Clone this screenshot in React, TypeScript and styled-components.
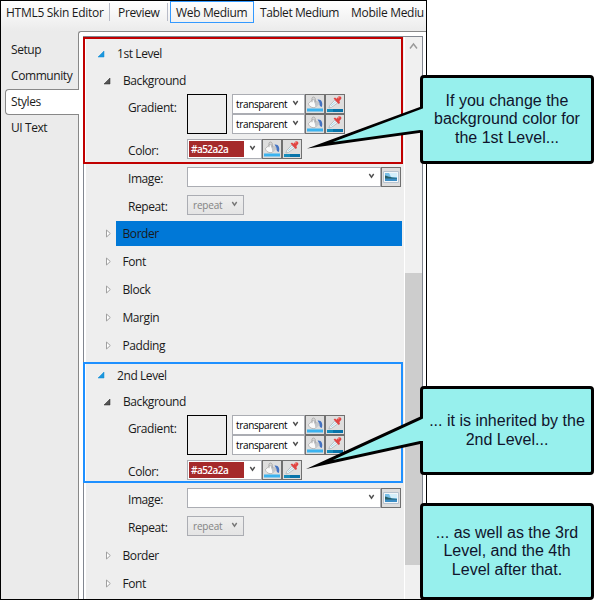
import React from 'react';
import styled, { createGlobalStyle } from 'styled-components';

const GlobalStyle = createGlobalStyle`
  * { box-sizing: border-box; }
  html, body { margin: 0; padding: 0; background: #fff; overflow: hidden; }
`;

const Page = styled.div`
  position: relative;
  width: 604px;
  height: 600px;
  overflow: hidden;
  background: #fff;
  color: #1a1a1a;
  font-family: 'Open Sans', 'Noto Sans', sans-serif;
  font-size: 12px;
  line-height: 16px;
  letter-spacing: -0.42px;
  white-space: nowrap;
`;

const Window = styled.div`
  display: flex;
  flex-direction: column;
  width: 427px;
  height: 600px;
  border: 1px solid #000;
  background: #ebebeb;
  overflow: hidden;
`;

const Toolbar = styled.header`
  display: flex;
  align-items: flex-start;
  flex: 0 0 30px;
  padding-left: 5px;
  background: linear-gradient(#fff, #ebebeb);
`;

const ToolItem = styled.div<{ $width: number; $indent?: number; $spacing?: number; $active?: boolean }>`
  flex: 0 0 ${(p) => p.$width}px;
  height: 22px;
  padding: ${(p) => (p.$active ? 3 : 4)}px 0 0 ${(p) => p.$indent ?? 0}px;
  border: ${(p) => (p.$active ? '1px solid #3399ff' : '0')};
  letter-spacing: ${(p) => p.$spacing ?? -0.34}px;
`;

const Separator = styled.div<{ $after: number }>`
  flex: 0 0 1px;
  height: 18px;
  margin: 2px ${(p) => p.$after}px 0 0;
  background: #b9bcc8;
`;

const Body = styled.div`
  display: flex;
  flex: 1;
  min-height: 0;
`;

const Sidebar = styled.nav`
  flex: 0 0 78px;
  padding: 6px 0 0 4px;
  z-index: 1;
`;

const SideTab = styled.div<{ $active?: boolean }>`
  height: 26px;
  width: 74px;
  padding: ${(p) => (p.$active ? '4px 0 0 5px' : '5px 0 0 6px')};
  border: ${(p) => (p.$active ? '1px solid #888' : '0')};
  border-right: 0;
  border-radius: 4px 0 0 4px;
  background: ${(p) => (p.$active ? '#fff' : 'transparent')};
`;

const TabPage = styled.main`
  display: flex;
  flex: 1;
  margin-left: -1px;
  padding: 4px 3px 0 4px;
  border: 1px solid #888;
  border-right: 0;
  border-bottom: 0;
  border-top-left-radius: 3px;
  background: #fff;
`;

const TreeFrame = styled.div`
  display: flex;
  flex: 1;
  min-width: 0;
  border: 1px solid #828790;
  border-bottom: 0;
  background: #fff;
  overflow: hidden;
`;

const Tree = styled.div`
  flex: 0 0 318px;
  margin-left: 2px;
  background: #eee;
`;

const ScrollTrack = styled.div`
  display: flex;
  flex-direction: column;
  flex: 0 0 17px;
  margin-left: 1px;
  background: #f0f0f0;
`;

const ScrollArrow = styled.svg`
  width: 17px;
  height: 236px;
`;

const ScrollThumb = styled.div`
  height: 292px;
  background: #cdcdcd;
`;

const TreeRow = styled.div<{ $height: number; $indent: number }>`
  display: flex;
  align-items: center;
  height: ${(p) => p.$height}px;
  padding-left: ${(p) => p.$indent}px;
`;

const Glyph = styled.svg<{ $gap: number }>`
  flex: none;
  width: 8px;
  height: 9px;
  margin-right: ${(p) => p.$gap}px;
`;

const GroupLabel = styled.div<{ $selected?: boolean }>`
  flex: 1;
  height: 25px;
  margin-right: 2px;
  padding: 5.5px 0 0 6.5px;
  background: ${(p) => (p.$selected ? '#0078d7' : 'transparent')};
`;

const Field = styled.div<{ $height: number; $top: number }>`
  display: flex;
  height: ${(p) => p.$height}px;
  padding: ${(p) => p.$top}px 0 0 42px;
`;

const FieldLabel = styled.div<{ $top?: number }>`
  flex: 0 0 59px;
  padding-top: ${(p) => p.$top ?? 3.5}px;
`;

const Preview = styled.div`
  width: 40px;
  height: 40px;
  margin-right: 5px;
  border: 1px solid #000;
`;

const Stack = styled.div`
  display: flex;
  flex-direction: column;
`;

const Line = styled.div`
  display: flex;
  height: 20px;
`;

const Combo = styled.div<{ $width: number; $disabled?: boolean }>`
  display: flex;
  align-items: center;
  justify-content: space-between;
  width: ${(p) => p.$width}px;
  height: 20px;
  padding: 0 5px 0 ${(p) => (p.$disabled ? 5 : 3)}px;
  border: 1px solid #abadb3;
  background: ${(p) => (p.$disabled ? 'linear-gradient(#efefef, #e4e4e4)' : '#fff')};
  color: ${(p) => (p.$disabled ? '#838383' : '#000')};
  font-size: 10px;
  font-weight: 500;
  line-height: 14px;
  letter-spacing: ${(p) => (p.$disabled ? -0.2 : -0.35)}px;
`;

const Swatch = styled.div`
  width: 55px;
  height: 16px;
  margin-left: -2px;
  padding: 1px 0 0 2px;
  background: #a52a2a;
  color: #fff;
  font-weight: 600;
  letter-spacing: -0.55px;
`;

const Chevron = styled.svg`
  flex: none;
  width: 7px;
  height: 6px;
  margin-bottom: 2px;
`;

const IconButton = styled.div`
  width: 20px;
  height: 20px;
  border: 1px solid #707070;
  background: #dedede;

  svg { display: block; }
`;

const Highlight = styled.div<{ $top: number; $height: number; $color: string }>`
  position: absolute;
  left: 83px;
  top: ${(p) => p.$top}px;
  width: 320px;
  height: ${(p) => p.$height}px;
  border: 2px solid ${(p) => p.$color};
`;

const Callout = styled.div<{ $top: number; $height: number }>`
  position: absolute;
  left: 420px;
  top: ${(p) => p.$top}px;
  display: flex;
  align-items: center;
  justify-content: center;
  width: 174px;
  height: ${(p) => p.$height}px;
  border: 3px solid #000;
  border-radius: 4px;
  background: #97f0ed;
  color: #10142c;
  font-family: 'Liberation Sans', Arial, sans-serif;
  font-size: 16px;
  line-height: 18.4px;
  letter-spacing: 0;
  text-align: center;
`;

const Tail = styled.svg`
  position: absolute;
  left: 300px;
  top: 0;
  width: 130px;
  height: 600px;
`;

function Expanded({ blue, gap }: { blue?: boolean; gap: number }) {
  return (
    <Glyph $gap={gap} viewBox="0 0 8 9">
      <path
        d="M7 1V7H1Z"
        fill={blue ? '#1c97dc' : '#555'}
        stroke={blue ? '#0f8ad6' : '#262626'}
        strokeWidth=".5"
      />
    </Glyph>
  );
}

function Collapsed() {
  return (
    <Glyph $gap={4} viewBox="0 0 8 9">
      <path d="M2.5 1L6.3 4.5L2.5 8Z" fill="#fff" stroke="#a0a0a0" />
    </Glyph>
  );
}

function Down({ muted }: { muted?: boolean }) {
  return (
    <Chevron viewBox="0 0 7 6">
      <path d="M1.3 1L3.5 4.2L5.7 1" fill="none" stroke={muted ? '#777' : '#505050'} strokeWidth="1.4" />
    </Chevron>
  );
}

function BucketButton() {
  return (
    <IconButton>
      <svg width="18" height="18" viewBox="0 0 18 18">
        <path d="M11.5 4.6C15.4 4 17.3 7.8 15.8 12C14 11.8 13.4 10.2 13.4 7.8Z" fill="#4473c2" />
        <path d="M2.4 8.6L7.2 4.2L13.2 8.2L9.2 12.4C6.4 13.2 3 11.8 2.4 8.6Z" fill="#fafafa" stroke="#a5a5a5" strokeWidth=".7" />
        <path d="M7.2 4.2L13.2 8.2L9.2 12.4C9.6 9.8 8.6 8.2 7.2 4.2Z" fill="#c3c6ca" />
        <path d="M6 7.2V3.4C6.2 1.6 8.8 1.6 9.2 3.6V7.4" fill="none" stroke="#a4a4a4" strokeWidth=".9" />
        <path d="M1 13.5H17V16.5H1Z" fill="#3bb3ef" />
      </svg>
    </IconButton>
  );
}

function DropperButton() {
  return (
    <IconButton>
      <svg width="18" height="18" viewBox="0 0 18 18">
        <path d="M8.8 5L11.8 7.8L5.4 12.4L2.9 13L3.7 10.5Z" fill="#f1f5f7" stroke="#a5adb3" strokeWidth=".7" />
        <path d="M4.8 11L10 6.6" stroke="#a9d8e8" />
        <path d="M7.6 3.6L9 2.6L10.6 3.8L12.2 1.8C13.9 .6 15.9 2 15.3 3.8L13.4 6.1L14 8L12.6 9Z" fill="#e14543" />
        <path d="M12 3.2L13.5 2" stroke="#ff9b91" />
        <path d="M1 14H17V17H1Z" fill="#0873a9" />
        <path d="M1 14H7V17H1Z" fill="#168dbd" />
      </svg>
    </IconButton>
  );
}

function PictureButton() {
  return (
    <IconButton>
      <svg width="18" height="18" viewBox="0 0 18 18">
        <path d="M1.5 3.5H16.5V14.5H1.5Z" fill="#f3f7fa" stroke="#b7c3cf" />
        <path d="M3 5H15V13H3Z" fill="#78bfe8" />
        <path d="M7 5H15V9H9Z" fill="#d4effb" />
        <path d="M3 7.5C6 8 7 9.5 15 10V11H3Z" fill="#285e66" />
        <path d="M3 10.5H15V13H3Z" fill="#3b8dc5" />
      </svg>
    </IconButton>
  );
}

function TransparentLine() {
  return (
    <Line>
      <Combo $width={73}>transparent<Down /></Combo>
      <BucketButton />
      <DropperButton />
    </Line>
  );
}

interface LevelProps {
  title: string;
  titleHeight: number;
  repeatHeight: number;
}

function LevelSection({ title, titleHeight, repeatHeight }: LevelProps) {
  return (
    <>
      <TreeRow $height={titleHeight} $indent={11}><Expanded blue gap={12} />{title}</TreeRow>
      <TreeRow $height={20} $indent={17}><Expanded gap={12} />Background</TreeRow>
      <Field $height={45} $top={3}>
        <FieldLabel $top={6}>Gradient:</FieldLabel>
        <Preview />
        <Stack><TransparentLine /><TransparentLine /></Stack>
      </Field>
      <Field $height={27} $top={3}>
        <FieldLabel>Color:</FieldLabel>
        <Combo $width={75}><Swatch>#a52a2a</Swatch><Down /></Combo>
        <BucketButton />
        <DropperButton />
      </Field>
      <Field $height={28} $top={4}>
        <FieldLabel>Image:</FieldLabel>
        <Combo $width={194}><span /><Down /></Combo>
        <PictureButton />
      </Field>
      <Field $height={repeatHeight} $top={4}>
        <FieldLabel>Repeat:</FieldLabel>
        <Combo $width={57} $disabled>repeat<Down muted /></Combo>
      </Field>
    </>
  );
}

function Group({ name, selected }: { name: string; selected?: boolean }) {
  return (
    <TreeRow $height={28} $indent={18}>
      <Collapsed />
      <GroupLabel $selected={selected}>{name}</GroupLabel>
    </TreeRow>
  );
}

export default function App() {
  return (
    <Page>
      <GlobalStyle />
      <Window>
        <Toolbar>
          <ToolItem $width={103} $spacing={-0.28}>HTML5 Skin Editor</ToolItem>
          <Separator $after={8} />
          <ToolItem $width={49}>Preview</ToolItem>
          <Separator $after={2} />
          <ToolItem $width={84} $indent={5} $active>Web Medium</ToolItem>
          <ToolItem $width={91} $indent={6} $spacing={-0.4}>Tablet Medium</ToolItem>
          <ToolItem $width={80} $indent={6} $spacing={-0.3}>Mobile Mediu</ToolItem>
        </Toolbar>
        <Body>
          <Sidebar>
            <SideTab>Setup</SideTab>
            <SideTab>Community</SideTab>
            <SideTab $active>Styles</SideTab>
            <SideTab>UI Text</SideTab>
          </Sidebar>
          <TabPage>
            <TreeFrame>
              <Tree>
                <LevelSection title="1st Level" titleHeight={34} repeatHeight={28} />
                <Group name="Border" selected />
                <Group name="Font" />
                <Group name="Block" />
                <Group name="Margin" />
                <Group name="Padding" />
                <LevelSection title="2nd Level" titleHeight={33} repeatHeight={29} />
                <Group name="Border" />
                <Group name="Font" />
              </Tree>
              <ScrollTrack>
                <ScrollArrow viewBox="0 0 17 236">
                  <path d="M5 11.5L8.5 7L12 11.5" fill="none" stroke="#999" strokeWidth="1.4" />
                </ScrollArrow>
                <ScrollThumb />
              </ScrollTrack>
            </TreeFrame>
          </TabPage>
        </Body>
      </Window>
      <Highlight $top={37} $height={127} $color="#c00000" />
      <Highlight $top={362} $height={121} $color="#1e90ff" />
      <Callout $top={75} $height={89}>
        If you change the<br />background color for<br />the 1st Level...
      </Callout>
      <Callout $top={386} $height={89}>
        ... it is inherited by the<br />2nd Level...
      </Callout>
      <Callout $top={503} $height={97}>
        ... as well as the 3rd<br />Level, and the 4th<br />Level after that.
      </Callout>
      <Tail viewBox="300 0 130 600">
        <path d="M307 148.5L422.5 106V132.5Z" fill="#000" />
        <path d="M333 142L420 109.5L424 108V130.5L420 130Z" fill="#97f0ed" />
        <path d="M306 469L422.5 415.5V443.5Z" fill="#000" />
        <path d="M333 460L420 420L424 418V441L420 441Z" fill="#97f0ed" />
      </Tail>
    </Page>
  );
}
